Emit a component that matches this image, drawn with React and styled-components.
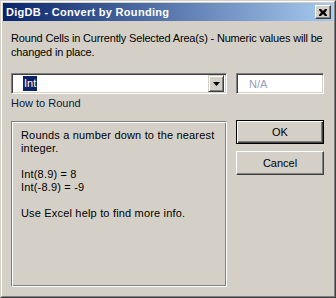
import styled, { createGlobalStyle } from "styled-components";

const GlobalStyle = createGlobalStyle`
  html, body {
    margin: 0;
    padding: 0;
    background: #d4d0c8;
  }
  body {
    font-family: "Liberation Sans", Arial, sans-serif;
    font-size: 11px;
  }
`;

const Window = styled.div`
  width: 336px;
  height: 298px;
  box-sizing: border-box;
  background: #d4d0c8;
  border-top: 1px solid #d4d0c8;
  border-left: 1px solid #d4d0c8;
  border-right: 1px solid #404040;
  border-bottom: 1px solid #404040;
  display: flex;
`;

const Frame = styled.div`
  flex: 1;
  display: flex;
  flex-direction: column;
  border-top: 1px solid #fff;
  border-left: 1px solid #fff;
  border-right: 1px solid #808080;
  border-bottom: 1px solid #808080;
  padding: 1px;
`;

const TitleBar = styled.div`
  height: 18px;
  display: flex;
  align-items: center;
  justify-content: space-between;
  padding: 0 2px 0 3px;
  background: linear-gradient(to right, #0a246a, #a6caf0);
`;

const Title = styled.span`
  color: #fff;
  font-weight: bold;
  font-size: 11px;
  letter-spacing: 0.3px;
`;

const CloseButton = styled.div`
  width: 16px;
  height: 14px;
  box-sizing: border-box;
  background: #d4d0c8;
  border-top: 1px solid #fff;
  border-left: 1px solid #fff;
  border-right: 1px solid #404040;
  border-bottom: 1px solid #404040;
  box-shadow: inset -1px -1px 0 #808080;
  display: flex;
  align-items: center;
  justify-content: center;
`;

const Body = styled.div`
  flex: 1;
  display: flex;
  flex-direction: column;
  padding: 10px 8px 0 8px;
  color: #000;
`;

const Intro = styled.p`
  margin: 0;
  line-height: 14px;
  white-space: nowrap;
  letter-spacing: -0.17px;
`;

const FieldRow = styled.div`
  display: flex;
  gap: 9px;
  margin-top: 14px;
`;

const Sunken = styled.div`
  box-sizing: border-box;
  height: 21px;
  width: ${(p) => p.$w}px;
  background: #fff;
  border-top: 1px solid #808080;
  border-left: 1px solid #808080;
  border-right: 1px solid #fff;
  border-bottom: 1px solid #fff;
  box-shadow: inset 1px 1px 0 #404040, inset -1px -1px 0 #d4d0c8;
  display: flex;
  align-items: center;
  padding: 2px;
`;

const Selected = styled.span`
  margin-left: 9px;
  background: #0a246a;
  color: #fff;
  padding: 1px 1px;
  line-height: 13px;
`;

const Disabled = styled.span`
  margin-left: 10px;
  color: #97a0b8;
`;

const DropButton = styled.div`
  margin-left: auto;
  width: 16px;
  height: 17px;
  box-sizing: border-box;
  background: #d4d0c8;
  border-top: 1px solid #d4d0c8;
  border-left: 1px solid #d4d0c8;
  border-right: 1px solid #404040;
  border-bottom: 1px solid #404040;
  box-shadow: inset 1px 1px 0 #fff, inset -1px -1px 0 #808080;
  display: flex;
  align-items: center;
  justify-content: center;
`;

const Label = styled.div`
  margin-top: 3px;
  line-height: 13px;
  color: #0b1a3c;
`;

const Lower = styled.div`
  display: flex;
  gap: 9px;
  margin-top: 11px;
  align-items: flex-start;
`;

const Group = styled.div`
  width: 216px;
  height: 166px;
  box-sizing: border-box;
  border-top: 1px solid #808080;
  border-left: 1px solid #808080;
  border-right: 1px solid #fff;
  border-bottom: 1px solid #fff;
  box-shadow: inset 1px 1px 0 #fff, inset -1px -1px 0 #808080;
  padding: 7px 9px;
  letter-spacing: 0.18px;
`;

const Para = styled.p`
  margin: 0 0 13px 0;
  line-height: 13px;
`;

const Buttons = styled.div`
  display: flex;
  flex-direction: column;
  gap: 7px;
  margin-top: -1px;
`;

const Button = styled.div`
  width: 88px;
  height: 24px;
  box-sizing: border-box;
  background: #d4d0c8;
  border: 1px solid ${(p) => (p.$default ? "#000" : "#fff")};
  ${(p) =>
    p.$default
      ? "box-shadow: inset 1px 1px 0 #fff, inset -1px -1px 0 #404040, inset -2px -2px 0 #808080;"
      : "border-right-color: #404040; border-bottom-color: #404040; box-shadow: inset -1px -1px 0 #808080;"}
  display: flex;
  align-items: center;
  justify-content: center;
  color: #000;
`;

const App = () => {
  return (
    <>
      <GlobalStyle />
      <Window>
        <Frame>
          <TitleBar>
            <Title>DigDB - Convert by Rounding</Title>
            <CloseButton>
              <svg width="8" height="7" viewBox="0 0 8 7">
                <path d="M0 0h2l2 2 2-2h2v1l-2 2.5 2 2.5v1h-2l-2-2-2 2h-2v-1l2-2.5-2-2.5z" fill="#000" />
              </svg>
            </CloseButton>
          </TitleBar>
          <Body>
            <Intro>
              Round Cells in Currently Selected Area(s) - Numeric values will be
              <br />
              changed in place.
            </Intro>
            <FieldRow>
              <Sunken $w={216}>
                <Selected>Int</Selected>
                <DropButton>
                  <svg width="7" height="4" viewBox="0 0 7 4">
                    <path d="M0 0h7l-3.5 4z" fill="#000" />
                  </svg>
                </DropButton>
              </Sunken>
              <Sunken $w={88}>
                <Disabled>N/A</Disabled>
              </Sunken>
            </FieldRow>
            <Label>How to Round</Label>
            <Lower>
              <Group>
                <Para>
                  Rounds a number down to the nearest
                  <br />
                  integer.
                </Para>
                <Para>
                  Int(8.9) = 8
                  <br />
                  Int(-8.9) = -9
                </Para>
                <Para>Use Excel help to find more info.</Para>
              </Group>
              <Buttons>
                <Button $default>OK</Button>
                <Button>Cancel</Button>
              </Buttons>
            </Lower>
          </Body>
        </Frame>
      </Window>
    </>
  );
};

export default App;
